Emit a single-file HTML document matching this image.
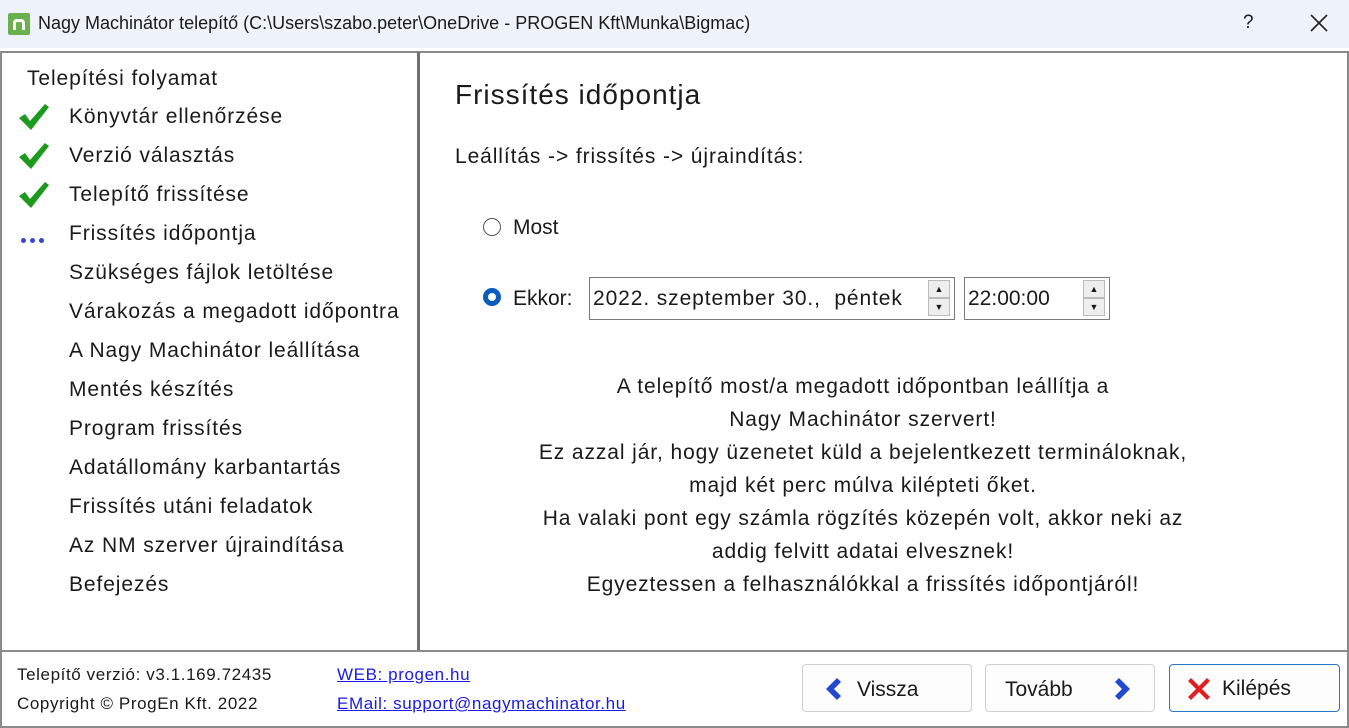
<!DOCTYPE html>
<html><head><meta charset="utf-8"><style>
*{margin:0;padding:0;box-sizing:border-box}
body{width:1349px;height:728px;overflow:hidden;background:#fff;font-family:"Liberation Sans",sans-serif;color:#1a1a1a;position:relative}
.abs{position:absolute;white-space:nowrap}
#title{left:0;top:0;width:1349px;height:48px;background:#eef3f9}
#frame{left:0;top:51px;width:1349px;height:677px;border:2px solid #8a8a8a;border-top:2px solid #8a8a8a}
.t{font-size:21px;letter-spacing:0.9px}
.n{font-size:21px}
.li{left:69px;font-size:21px;letter-spacing:0.9px}
.chk{left:17px;width:34px;height:30px}
.btn{top:664px;height:48px;border:1px solid #d0d0d0;border-radius:4px;background:#fdfdfd}
.f{font-size:17px;letter-spacing:0.6px}
</style></head><body>
<div id="title" class="abs"></div>
<div class="abs" style="left:8px;top:13px;width:22px;height:22px;background:#6ab04c;border-radius:2px"><div style="position:absolute;left:5px;top:6px;width:12px;height:11px;border:3px solid #fff;border-bottom:none;border-radius:4px 4px 0 0"></div></div>
<div class="abs" style="left:38px;top:13px;font-size:18px">Nagy Machinátor telepítő (C:\Users\szabo.peter\OneDrive - PROGEN Kft\Munka\Bigmac)</div>
<div class="abs" style="left:1243px;top:12px;font-size:19px">?</div>
<svg class="abs" style="left:1310px;top:14px" width="18" height="18" viewBox="0 0 18 18"><path d="M1 1L17 17M17 1L1 17" stroke="#222" stroke-width="1.6"/></svg>
<div id="frame" class="abs"></div>
<div class="abs" style="left:417px;top:52px;width:3px;height:600px;background:#6e6e6e"></div>
<div class="abs" style="left:0;top:650px;width:1349px;height:2px;background:#8a8a8a"></div>

<div class="abs t" style="left:27px;top:67px">Telepítési folyamat</div>
<svg class="abs chk" style="top:102px" viewBox="0 0 34 30"><path d="M2 16 L8 12 L13 19 L28 2 L32 5 L14 28 Z" fill="#1d9a1d"/></svg>
<svg class="abs chk" style="top:141px" viewBox="0 0 34 30"><path d="M2 16 L8 12 L13 19 L28 2 L32 5 L14 28 Z" fill="#1d9a1d"/></svg>
<svg class="abs chk" style="top:180px" viewBox="0 0 34 30"><path d="M2 16 L8 12 L13 19 L28 2 L32 5 L14 28 Z" fill="#1d9a1d"/></svg>
<div class="abs" style="left:21px;top:238px;font-size:0"><span style="display:inline-block;width:5px;height:5px;border-radius:50%;background:#3545d8;margin-right:4px"></span><span style="display:inline-block;width:5px;height:5px;border-radius:50%;background:#3545d8;margin-right:4px"></span><span style="display:inline-block;width:5px;height:5px;border-radius:50%;background:#3545d8"></span></div>
<div class="abs li" style="top:105px">Könyvtár ellenőrzése</div>
<div class="abs li" style="top:144px">Verzió választás</div>
<div class="abs li" style="top:183px">Telepítő frissítése</div>
<div class="abs li" style="top:222px">Frissítés időpontja</div>
<div class="abs li" style="top:261px">Szükséges fájlok letöltése</div>
<div class="abs li" style="top:300px">Várakozás a megadott időpontra</div>
<div class="abs li" style="top:339px">A Nagy Machinátor leállítása</div>
<div class="abs li" style="top:378px">Mentés készítés</div>
<div class="abs li" style="top:417px">Program frissítés</div>
<div class="abs li" style="top:456px">Adatállomány karbantartás</div>
<div class="abs li" style="top:495px">Frissítés utáni feladatok</div>
<div class="abs li" style="top:534px">Az NM szerver újraindítása</div>
<div class="abs li" style="top:573px">Befejezés</div>

<div class="abs" style="left:455px;top:79px;font-size:28px;letter-spacing:1px">Frissítés időpontja</div>
<div class="abs t" style="left:455px;top:145px">Leállítás -&gt; frissítés -&gt; újraindítás:</div>
<div class="abs" style="left:483px;top:218px;width:18px;height:18px;border:1px solid #555;border-radius:50%"></div>
<div class="abs n" style="left:513px;top:216px">Most</div>
<div class="abs" style="left:483px;top:288px;width:18px;height:18px;border:5px solid #0a5cbf;border-radius:50%"></div>
<div class="abs n" style="left:513px;top:287px">Ekkor:</div>
<div class="abs" style="left:589px;top:277px;width:366px;height:43px;border:1px solid #7a7a7a;background:#fff"></div>
<div class="abs t" style="left:593px;top:287px">2022. szeptember 30.,&nbsp; péntek</div>
<div class="abs" style="left:964px;top:277px;width:146px;height:43px;border:1px solid #7a7a7a;background:#fff"></div>
<div class="abs n" style="left:968px;top:287px">22:00:00</div>
<div class="abs" style="left:928px;top:280px;width:22px;height:18px;border:1px solid #bbb;background:#eee;font-size:9px;text-align:center;line-height:16px">▲</div>
<div class="abs" style="left:928px;top:298px;width:22px;height:18px;border:1px solid #bbb;background:#eee;font-size:9px;text-align:center;line-height:16px">▼</div>
<div class="abs" style="left:1083px;top:280px;width:22px;height:18px;border:1px solid #bbb;background:#eee;font-size:9px;text-align:center;line-height:16px">▲</div>
<div class="abs" style="left:1083px;top:298px;width:22px;height:18px;border:1px solid #bbb;background:#eee;font-size:9px;text-align:center;line-height:16px">▼</div>

<div class="abs t" style="left:463px;width:800px;top:370px;text-align:center;line-height:33px;white-space:normal">A telepítő most/a megadott időpontban leállítja a<br>Nagy Machinátor szervert!<br>Ez azzal jár, hogy üzenetet küld a bejelentkezett termináloknak,<br>majd két perc múlva kilépteti őket.<br>Ha valaki pont egy számla rögzítés közepén volt, akkor neki az<br>addig felvitt adatai elvesznek!<br>Egyeztessen a felhasználókkal a frissítés időpontjáról!</div>

<div class="abs f" style="left:17px;top:665px">Telepítő verzió: v3.1.169.72435</div>
<div class="abs f" style="left:17px;top:694px">Copyright © ProgEn Kft. 2022</div>
<div class="abs f" style="left:337px;top:665px;color:#1a1ae6;text-decoration:underline">WEB: progen.hu</div>
<div class="abs f" style="left:337px;top:694px;color:#1a1ae6;text-decoration:underline">EMail: support@nagymachinator.hu</div>

<div class="abs btn" style="left:802px;width:170px"></div>
<svg class="abs" style="left:823px;top:677px" width="20" height="24" viewBox="0 0 20 24"><path d="M14 1 L3 12 L14 23 L18 19 L11 12 L18 5 Z" fill="#2448d0"/></svg>
<div class="abs n" style="left:857px;top:678px">Vissza</div>
<div class="abs btn" style="left:985px;width:170px"></div>
<div class="abs n" style="left:1005px;top:678px">Tovább</div>
<svg class="abs" style="left:1113px;top:677px" width="20" height="24" viewBox="0 0 20 24"><path d="M6 1 L17 12 L6 23 L2 19 L9 12 L2 5 Z" fill="#2448d0"/></svg>
<div class="abs btn" style="left:1169px;width:171px;border-color:#2b78c4"></div>
<svg class="abs" style="left:1185px;top:675px" width="28" height="28" viewBox="0 0 28 28"><path d="M3 6 L6 3 L14 11 L22 3 L25 6 L17 14 L25 22 L22 25 L14 17 L6 25 L3 22 L11 14 Z" fill="#e02020"/></svg>
<div class="abs n" style="left:1222px;top:677px">Kilépés</div>
</body></html>
